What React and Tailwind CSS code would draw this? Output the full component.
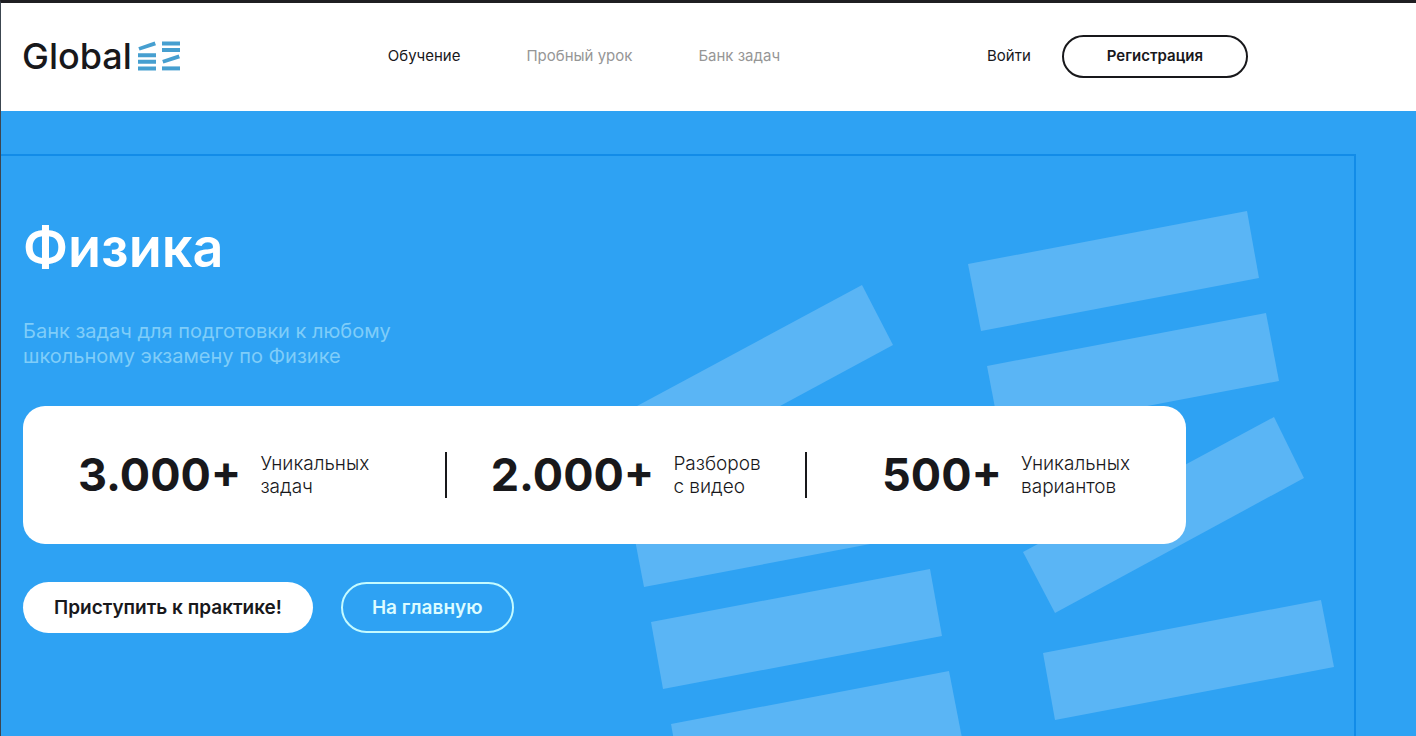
const navLinks = [
  { label: 'Обучение', active: true },
  { label: 'Пробный урок', active: false },
  { label: 'Банк задач', active: false },
];

const LogoMark = () => (
  <svg width="43" height="30" viewBox="0 0 43 30" fill="#469fd0" aria-hidden="true">
    <path d="M0.3 6.2 16.6 0.4 18 4.2 1.6 9.6Z" />
    <path d="M0 12.2h18v4H0zM0 18.8h18v4H0zM0 25.4h18v4H0z" />
    <path d="M24 0.4h18v4H24zM24 7h18v4H24z" />
    <path d="M24.2 19 40.6 13.6 42 17.2 25.4 22.6Z" />
    <path d="M24 25.4h18v4H24z" />
  </svg>
);

const Header = () => (
  <header className="flex items-center justify-between bg-white pb-[33px] pl-[21px] pr-[168px] pt-[31px]">
    <a href="#" className="flex items-center gap-1.5">
      <span className="text-[36px] font-medium leading-[44px]">Global</span>
      <LogoMark />
    </a>

    <nav className="flex items-center gap-[66px] text-[15px]">
      {navLinks.map((link) => (
        <a key={link.label} href="#" className={link.active ? 'text-[#18181b]' : 'text-[#969696]'}>
          {link.label}
        </a>
      ))}
    </nav>

    <div className="flex items-center gap-[31px] text-[15px]">
      <a href="#">Войти</a>
      <button type="button" className="h-[43px] rounded-full border-2 border-[#18181b] px-[43px] font-semibold">
        Регистрация
      </button>
    </div>
  </header>
);

const BackgroundBars = () => (
  <svg
    className="absolute right-5 top-[55px]"
    width="723"
    height="580"
    viewBox="611 211 723 580"
    fill="#5ab5f5"
    aria-hidden="true"
  >
    <path d="M611 420 862 285 893 345 643 480Z" />
    <path d="M631 519 910 467 923 534 644 587Z" />
    <path d="M651 622 930 569 942 636 663 689Z" />
    <path d="M671 724 949 671 962 738 683 791Z" />
    <path d="M968 264 1247 211 1259 278 981 331Z" />
    <path d="M987 366 1266 313 1279 381 1000 434Z" />
    <path d="M1023 552 1274 417 1304 478 1055 613Z" />
    <path d="M1043 653 1321 600 1334 667 1055 720Z" />
  </svg>
);

const Stat = ({ value, children }) => (
  <div className="flex items-center gap-[19px]">
    <span className="text-[45px] font-bold leading-[46px]">{value}</span>
    <span className="text-[19px] font-light leading-[23px]">{children}</span>
  </div>
);

const Hero = () => (
  <main className="flex grow bg-[#2ea2f3] pr-[60px] pt-[43px]">
    <section className="relative grow overflow-hidden border-r-2 border-t-2 border-[#128ce8] pb-[103px] pl-[22px] pr-[168px] pt-16">
      <BackgroundBars />
      <div className="relative">
        <h1 className="text-[54px] font-semibold leading-[56px] text-white">Физика</h1>
        <p className="mt-[43px] text-[20px] leading-[25px] text-[#7fcdf9]">
          Банк задач для подготовки к любому
          <br />
          школьному экзамену по Физике
        </p>

        <div className="mt-[37px] flex rounded-[22px] bg-white py-[46px]">
          <div className="flex-auto pl-[55px]">
            <Stat value="3.000+">
              Уникальных
              <br />
              задач
            </Stat>
          </div>
          <div className="border-x-2 border-[#18181b] px-11">
            <Stat value="2.000+">
              Разборов
              <br />с видео
            </Stat>
          </div>
          <div className="flex flex-auto justify-end pr-14">
            <Stat value="500+">
              Уникальных
              <br />
              вариантов
            </Stat>
          </div>
        </div>

        <div className="mt-[38px] flex gap-7 text-[19px] font-semibold">
          <button type="button" className="h-[51px] rounded-full bg-white px-[31px] pt-0.5">
            Приступить к практике!
          </button>
          <button type="button" className="h-[51px] rounded-full border-2 border-[#c4fbff] px-[29px] pt-0.5 text-[#dcfcff]">
            На главную
          </button>
        </div>
      </div>
    </section>
  </main>
);

const App = () => (
  <div className="flex min-h-screen flex-col border-l border-t-[3px] border-l-[#3c4650] border-t-[#1f1f22] font-['Inter',sans-serif] text-[#18181b]">
    <Header />
    <Hero />
  </div>
);

export default App;
